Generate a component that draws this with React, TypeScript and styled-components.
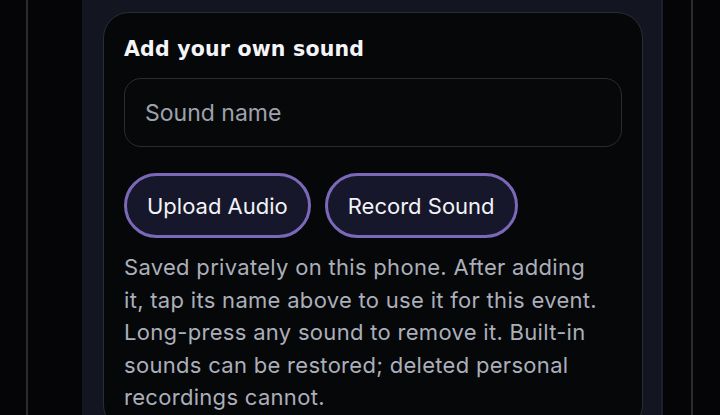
import React from "react";
import styled, { createGlobalStyle } from "styled-components";

const Global = createGlobalStyle`
  html, body { margin: 0; padding: 0; background: #050507; }
  body { font-family: Inter, "Noto Sans", sans-serif; overflow: hidden; }
  * { box-sizing: border-box; }
`;

const Page = styled.div`
  display: flex;
  height: 415px;
  padding-left: 26px;
  background: #050507;
`;

const Frame = styled.div`
  display: flex;
  width: 667px;
  border-left: 2px solid #2a2b2f;
  border-right: 2px solid #2a2b2f;
  padding-left: 54px;
  padding-right: 28px;
  background: #050507;
`;

const Panel = styled.div`
  flex: 1;
  background: #131621;
  border-right: 2px solid #1c202b;
  padding: 12px 18px 0 21px;
`;

const Card = styled.section`
  background: #060709;
  border: 1px solid #2a2d34;
  border-radius: 26px;
  padding: 23px 20px 16px;
  display: flex;
  flex-direction: column;
`;

const Heading = styled.h2`
  margin: 0;
  font-family: "DejaVu Sans", Inter, sans-serif;
  font-size: 20.5px;
  line-height: 26px;
  font-weight: 700;
  letter-spacing: 0.2px;
  color: #f4f5f8;
`;

const Input = styled.input`
  margin-top: 16px;
  height: 69px;
  width: 100%;
  border: 1px solid #2a2c31;
  border-radius: 17px;
  background: #07080a;
  padding: 0 20px;
  font-family: inherit;
  font-size: 23px;
  color: #e8e9ee;
  outline: none;
  &::placeholder { color: #9ea2ad; }
`;

const ButtonRow = styled.div`
  display: flex;
  gap: 14px;
  margin-top: 26px;
`;

const PillButton = styled.button`
  height: 65px;
  padding: 0 20px;
  border: 3px solid #7c68b9;
  border-radius: 33px;
  background: #16172a;
  color: #f3f3f7;
  font-family: inherit;
  font-size: 22px;
  letter-spacing: 0;
  cursor: pointer;
`;

const Help = styled.p`
  margin: 13px 0 0;
  font-size: 22px;
  line-height: 32.5px;
  letter-spacing: 0.3px;
  color: #abafba;
  max-width: 485px;
`;

export default function App() {
  return (
    <>
      <Global />
      <Page>
        <Frame>
          <Panel>
            <Card>
              <Heading>Add your own sound</Heading>
              <Input placeholder="Sound name" />
              <ButtonRow>
                <PillButton>Upload Audio</PillButton>
                <PillButton>Record Sound</PillButton>
              </ButtonRow>
              <Help>
                Saved privately on this phone. After adding it, tap its name above to use it for this
                event. Long-press any sound to remove it. Built-in sounds can be restored; deleted
                personal recordings cannot.
              </Help>
            </Card>
          </Panel>
        </Frame>
      </Page>
    </>
  );
}
